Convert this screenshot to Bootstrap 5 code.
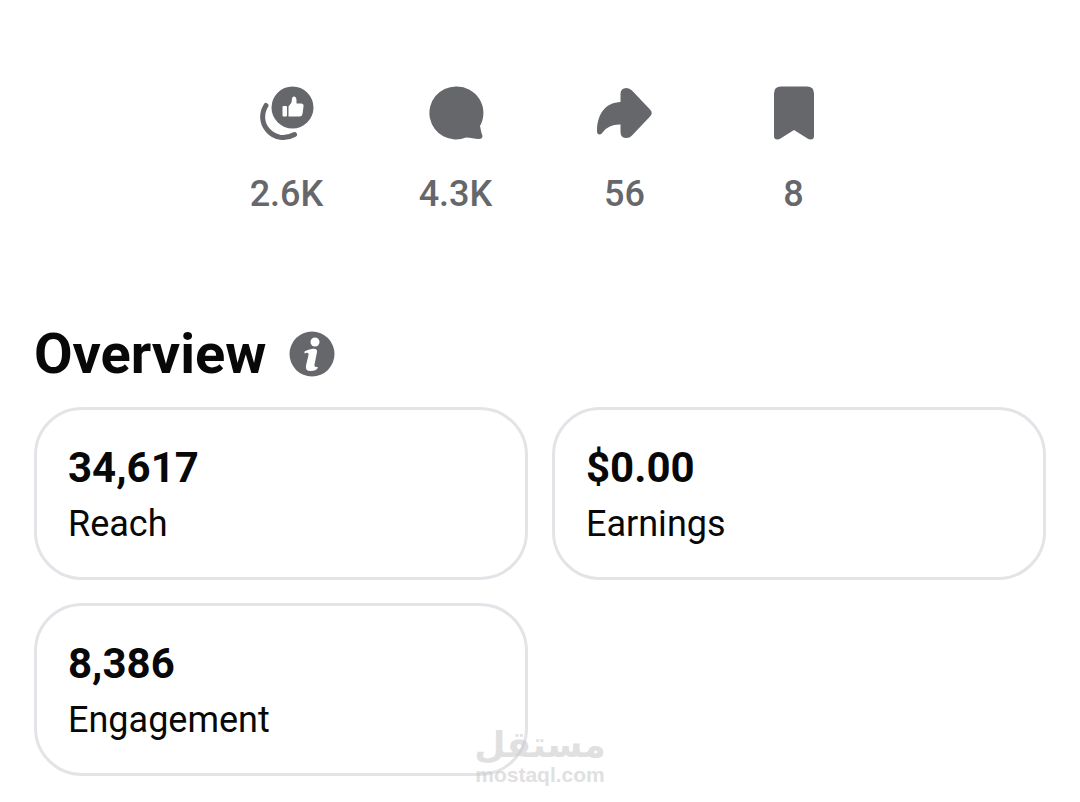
<!DOCTYPE html>
<html lang="en">
<head>
<meta charset="utf-8">
<meta name="viewport" content="width=device-width, initial-scale=1">
<title>Post insights</title>
<link href="https://cdn.jsdelivr.net/npm/bootstrap@5.3.0/dist/css/bootstrap.min.css" rel="stylesheet">
<style>
  body { font-family: Roboto, "Liberation Sans", sans-serif; color: #080809; background: #fff; }
  .insights { padding: 80px 34px 26px; }
  .counters { max-width: 676px; color: #65676b; font-size: 36px; line-height: 44px; font-weight: 500; }
  .counters li { gap: 26px; }
  .counters svg { width: 66px; height: 66px; }
  .section-head { gap: 23px; margin-bottom: 21px; }
  .section-title { font-size: 56px; line-height: 64px; font-weight: 700; }
  .info-btn { width: 46px; height: 46px; }
  .counter-list { margin-bottom: 106px; }
  .stats { --bs-gutter-x: 24px; --bs-gutter-y: 23px; }
  .stat { border: 3px solid #e2e4e7; border-radius: 48px; padding: 30px 31px 25px; line-height: 56px; }
  .stat dd { font-size: 42px; font-weight: 700; }
  .stat dt { font-size: 36px; font-weight: 400; }
  .watermark { bottom: -15px; color: #c8c8c8; opacity: .55; }
  .watermark-ar { font: 700 36px/36px "DejaVu Sans", sans-serif; }
  .watermark-en { font: 700 21px/24px "Liberation Sans", sans-serif; }
</style>
</head>
<body>
<main class="insights container-fluid position-relative">
  <ul class="counters counter-list list-unstyled row g-0 mx-auto text-center">
    <li class="col-3 d-flex flex-column align-items-center">
      <svg viewBox="0 0 66 66" role="img" aria-label="Reactions">
        <circle cx="38.500" cy="27.500" r="21" fill="#65676b"/>
        <path d="M12 25.500C7 33.500 7.500 43.500 14 50.500C21 58.500 31.500 59.500 40.500 54.500" fill="none" stroke="#65676b" stroke-width="5" stroke-linecap="round"/>
        <rect x="28.500" y="26" width="4.500" height="10.500" rx="1" fill="#fff"/>
        <path d="M34.500 26.500L37.500 22.500L38 18.500Q38.500 16 40.500 16.500Q42.500 17 42.500 20V23.500H47.500Q50 24 49.500 26.500L48.500 34Q48 36.500 45.500 36.500H34.500Z" fill="#fff"/>
      </svg>
      <span>2.6K</span>
    </li>
    <li class="col-3 d-flex flex-column align-items-center">
      <svg viewBox="0 0 66 66" role="img" aria-label="Comments" fill="#65676b">
        <path d="M33 6.500A26.500 26.500 0 1 0 43 57.500C48 57.500 51 59 56 59Q59.500 59 59.500 56Q58 52 57 46A26.500 26.500 0 0 0 33 6.500Z"/>
      </svg>
      <span>4.3K</span>
    </li>
    <li class="col-3 d-flex flex-column align-items-center">
      <svg viewBox="0 0 66 66" role="img" aria-label="Shares" fill="#65676b">
        <path d="M28.500 14Q28.500 8 34.500 8Q37.500 8 40 10.500L58 29.500Q61.500 33 58 36.500L40 55.500Q37.500 58 34.500 58Q28.500 58 28.500 52V44.500Q17 44 11 52Q9 55 7 54.500Q4.500 54 5 49C6 33 14 22.500 28.500 22Z"/>
      </svg>
      <span>56</span>
    </li>
    <li class="col-3 d-flex flex-column align-items-center">
      <svg viewBox="0 0 66 66" role="img" aria-label="Saves" fill="#65676b">
        <path d="M20 6.500H46Q53 6.500 53 13.500V56Q53 59.500 49.500 59.500Q48 59.500 46.500 58.500L33 50L19.500 58.500Q18 59.500 16.500 59.500Q13 59.500 13 56V13.500Q13 6.500 20 6.500Z"/>
      </svg>
      <span>8</span>
    </li>
  </ul>

  <div class="section-head d-flex align-items-center">
    <h1 class="section-title m-0">Overview</h1>
    <button type="button" class="info-btn btn p-0 border-0 d-flex" aria-label="About these numbers">
      <svg viewBox="0 0 46 46" width="46" height="46">
        <circle cx="23" cy="23" r="22.500" fill="#65676b"/>
        <circle cx="26" cy="11" r="4.500" fill="#fff"/>
        <path d="M15.500 20.500Q19 18.200 24 17.800Q28.500 17.500 28 21L25.500 33.500Q25 36.500 27.500 35.800L29 36.500Q27.500 40 21.500 40Q16 40 17 34.500L19.500 24Q20 21.500 17.500 21.800L15.500 22.500Z" fill="#fff"/>
      </svg>
    </button>
  </div>

  <div class="stats row">
    <div class="col-6"><dl class="stat d-flex flex-column-reverse m-0"><dt>Reach</dt><dd class="m-0">34,617</dd></dl></div>
    <div class="col-6"><dl class="stat d-flex flex-column-reverse m-0"><dt>Earnings</dt><dd class="m-0">$0.00</dd></dl></div>
    <div class="col-6"><dl class="stat d-flex flex-column-reverse m-0"><dt>Engagement</dt><dd class="m-0">8,386</dd></dl></div>
  </div>

  <div class="watermark position-absolute start-50 translate-middle text-center pe-none">
    <div class="watermark-ar" lang="ar" dir="rtl">مستقل</div>
    <div class="watermark-en">mostaql.com</div>
  </div>
</main>
<script src="https://cdn.jsdelivr.net/npm/bootstrap@5.3.0/dist/js/bootstrap.bundle.min.js"></script>
</body>
</html>
